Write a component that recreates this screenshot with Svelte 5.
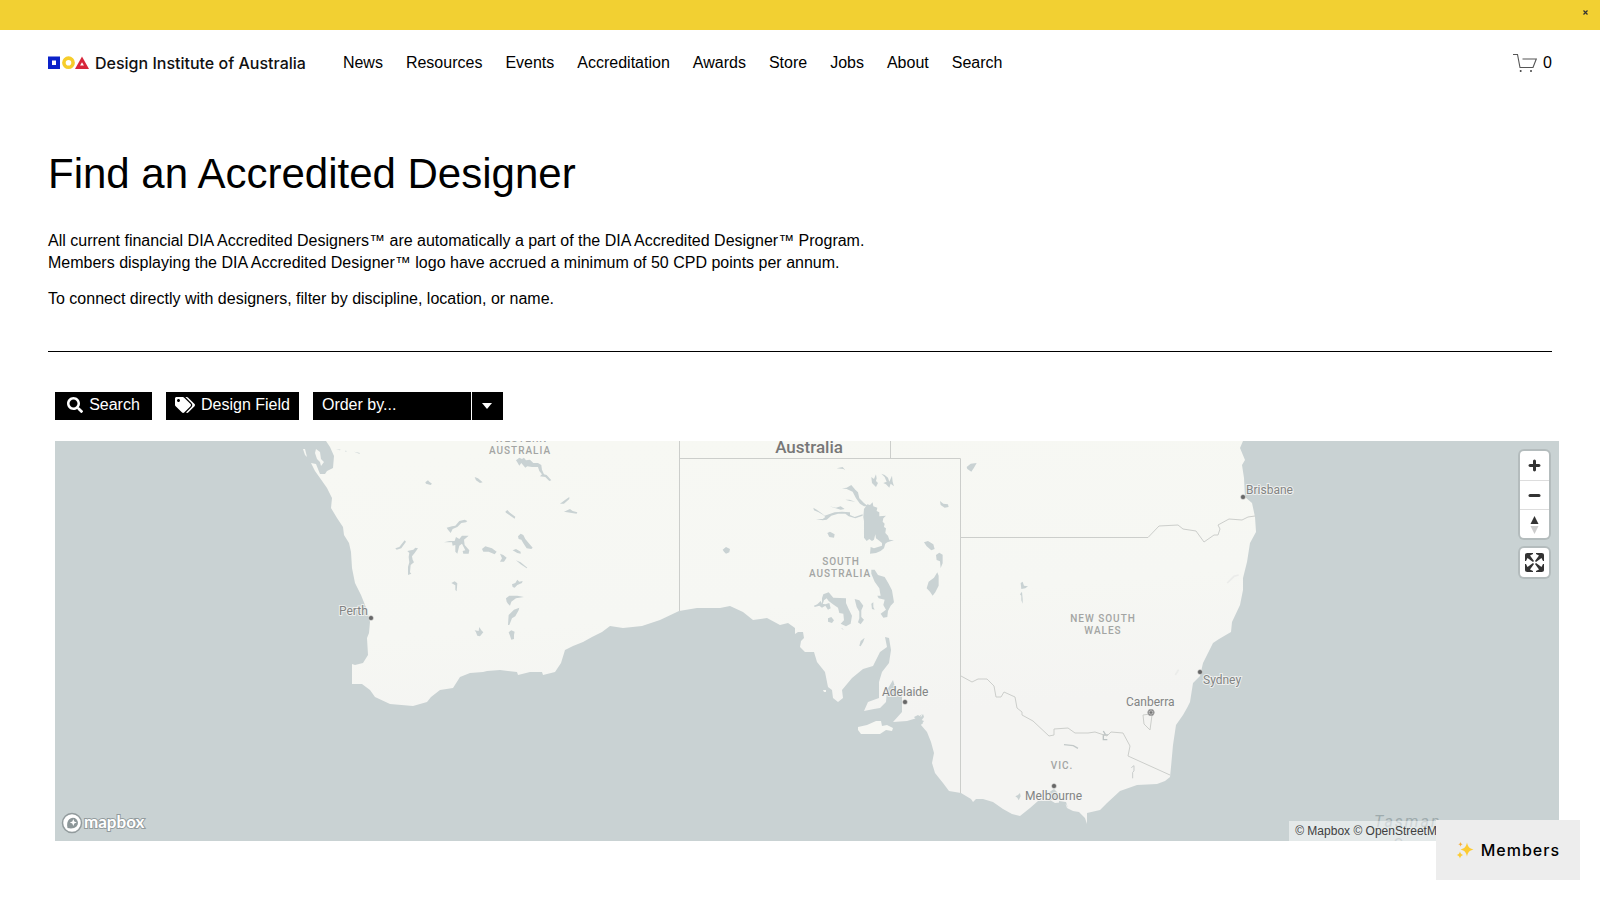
<script>
  const navItems = ["News", "Resources", "Events", "Accreditation", "Awards", "Store", "Jobs", "About", "Search"];

  const cities = [
    { name: "Perth", dot: [371, 618], label: [339, 615] },
    { name: "Adelaide", dot: [905, 702], label: [882, 696] },
    { name: "Melbourne", dot: [1054, 786], label: [1025, 800] },
    { name: "Sydney", dot: [1200, 672], label: [1203, 684] },
    { name: "Brisbane", dot: [1243, 497], label: [1246, 494] },
  ];

  const states = [
    { name: "WESTERN", x: 521, y: 442 },
    { name: "AUSTRALIA", x: 520, y: 454 },
    { name: "SOUTH", x: 841, y: 565 },
    { name: "AUSTRALIA", x: 840, y: 577 },
    { name: "NEW SOUTH", x: 1103, y: 622 },
    { name: "WALES", x: 1103, y: 634 },
    { name: "VIC.", x: 1062, y: 769 },
  ];

  let bannerOpen = $state(true);
  let order = $state("");
</script>

{#if bannerOpen}
  <div class="banner">
    <button class="banner-close" aria-label="Close announcement" onclick={() => (bannerOpen = false)}>
      <svg width="5" height="5" viewBox="0 0 5 5" stroke="#333" stroke-width="1.2"><path d="M.5 .5l4 4M4.5 .5l-4 4" /></svg>
    </button>
  </div>
{/if}

<header class="header">
  <a class="logo" href="#home">
    <svg width="41" height="14" viewBox="0 0 41 14" fill="none">
      <rect x="2" y="2.5" width="8" height="8.5" stroke="#0b22c9" stroke-width="4" />
      <circle cx="20.5" cy="6.7" r="4.6" stroke="#f6cd2b" stroke-width="3.6" />
      <path d="M34 .5L41 13H27z" fill="#d7263a" />
      <path d="M34 6.3l1.9 3.3h-3.8z" fill="#fff" />
    </svg>
    <span>Design Institute of Australia</span>
  </a>
  <nav class="nav">
    {#each navItems as item}
      <a href="#{item.toLowerCase()}">{item}</a>
    {/each}
  </nav>
  <a class="cart" href="#cart" aria-label="Cart, 0 items">
    <svg width="24" height="20" viewBox="0 0 24 20" fill="none" stroke="#555" stroke-width="1.1">
      <path d="M0 1.5h4.5L7 14.5h13l3.3-8.5H9.5" />
      <circle cx="7.7" cy="18" r="1" fill="#444" stroke="none" />
      <circle cx="18" cy="18" r="1" fill="#444" stroke="none" />
    </svg>
    <span>0</span>
  </a>
</header>

<main>
  <section class="intro">
    <h1>Find an Accredited Designer</h1>
    <p>
      All current financial DIA Accredited Designers™ are automatically a part of the DIA Accredited Designer™ Program.<br />
      Members displaying the DIA Accredited Designer™ logo have accrued a minimum of 50 CPD points per annum.
    </p>
    <p>To connect directly with designers, filter by discipline, location, or name.</p>
    <hr />
  </section>

  <section class="directory">
    <div class="filters">
      <button class="filter">
        <svg width="16" height="16" viewBox="0 0 512 512" fill="#fff">
          <path d="M505 442.700L405.300 343c-4.500-4.500-10.600-7-17-7H372c27.600-35.300 44-79.700 44-128C416 93.100 322.900 0 208 0S0 93.100 0 208s93.100 208 208 208c48.300 0 92.700-16.400 128-44v16.300c0 6.400 2.500 12.500 7 17l99.700 99.700c9.400 9.400 24.600 9.400 33.900 0l28.300-28.300c9.400-9.400 9.400-24.600.1-34zM208 336c-70.700 0-128-57.200-128-128 0-70.700 57.200-128 128-128 70.700 0 128 57.200 128 128 0 70.700-57.200 128-128 128z" />
        </svg>
        Search
      </button>
      <button class="filter">
        <svg width="20" height="16" viewBox="0 0 640 512" fill="#fff">
          <path d="M497.900 225.900L286.100 14.100A48 48 0 0 0 252.100 0H48C21.500 0 0 21.500 0 48v204.100a48 48 0 0 0 14.100 33.900l211.800 211.800c18.700 18.700 49.100 18.700 67.900 0l204.100-204.100c18.700-18.700 18.700-49.100 0-67.800zM112 160c-26.500 0-48-21.500-48-48s21.500-48 48-48 48 21.500 48 48-21.500 48-48 48zm513.900 133.800L421.800 497.900c-18.700 18.700-49.100 18.700-67.900 0l-.4-.4L527.600 323.500c17-17 26.400-39.600 26.400-63.600s-9.400-46.600-26.400-63.600L331.400 0h48.700a48 48 0 0 1 33.900 14.100l211.800 211.800c18.800 18.700 18.800 49.100.1 67.900z" />
        </svg>
        Design Field
      </button>
      <div class="order">
        <select aria-label="Order by" bind:value={order}>
          <option value="">Order by...</option>
          <option value="name">Name</option>
          <option value="location">Location</option>
        </select>
        <span class="order-arrow">
          <svg width="10" height="6" viewBox="0 0 10 6" fill="#fff"><path d="M0 0h10L5 6z" /></svg>
        </span>
      </div>
    </div>

    <div class="map">
      <svg class="map-canvas" viewBox="55 441 1504 400" preserveAspectRatio="xMidYMid slice" role="img" aria-label="Map of southern Australia">
        <defs>
          <linearGradient id="land" x1="0.3" y1="0" x2="0.5" y2="1">
            <stop offset="0" stop-color="#f7f8f3" />
            <stop offset="0.45" stop-color="#f6f7f3" />
            <stop offset="0.75" stop-color="#f4f4f2" />
          </linearGradient>
        </defs>
        <rect x="55" y="441" width="1504" height="400" fill="#c9d2d3" />
        <!-- mainland -->
        <path
          fill="url(#land)"
          d="M326 441L330 447L334 456L333 468L327 471L325 474L320 474L316 464L311 463L315 471L320 478L327 488L332 498L331 508L337 518L343 527L344 535L349 543L351 552L352 568L355 583L361 595L367 610L370 622L369 633L367 638L368 655L363 663L355 665L352 664L352 684L355 684L362 684L370 690L375 697L390 704L413 706L427 702L431 697L440 690L453 688L460 677L470 673L483 672L487 671L500 670L517 672L518 675L530 672L542 672L543 675L555 672L561 663L565 650L573 646L583 642L592 637L602 632L610 626L623 628L642 626L660 620L679 611L697 608L720 608L730 606L743 612L753 620L767 618L780 625L788 623L795 628L795 634L798 632L803 632L804 638L801 641L800 647L805 652L814 652L817 662L825 672L828 687L832 690L833 698L838 702L843 698L842 690L852 678L863 669L873 666L880 652L887 647L885 637L889 638L891 650L889 663L882 672L879 682L879 698L868 702L864 711L874 709L880 708L886 702L887 690L893 680L896 690L902 697L902 712L893 722L907 721L917 718L922 714L919 719L924 721L921 725L927 732L931 742L934 753L932 763L935 773L943 783L949 791L961 793L971 799L973 802L976 799L983 799L993 802L1003 809L1012 814L1020 816L1030 808L1038 801L1050 800L1055 803L1065 802L1067 808L1073 811L1079 812L1085 818L1087 824L1087 813L1100 810L1107 803L1120 791L1137 785L1157 784L1165 781L1170 777L1171 767L1173 745L1176 725L1183 715L1187 708L1190 702L1193 683L1200 676L1203 663L1208 653L1213 643L1219 639L1231 632L1232 622L1240 605L1243 590L1243 578L1247 562L1250 543L1256 532L1255 517L1252 503L1245 497L1244 478L1242 465L1245 460L1240 448L1243 441Z"
        />
        <!-- islands off Shark Bay, Kangaroo Island -->
        <path
          fill="#f6f7f3"
          d="M303 449l2 0 2 8-2-2zM316 449l4 3 1 7 3 3-3 4-1-4-3-3-2-6zM858 727l9-2 9-4 5 0 1 5 5-1 6 3-1 3-6-1-6 4-19 0-3-4zM823 690l3 0 0 2-2 0z"
        />
        <path fill="#c9d2d3" d="M914 717l4-2 3 2 2-3 1 3-3 4 2 3-4-1zM1048 793l6-4 3 3 2 7-8 1zM1059 801l7 1 2 6-2-4-7-1z" />

        <!-- salt lakes of Western Australia -->
        <g transform="translate(290 435) scale(0.3333)" fill="#c9d2d3">
          <path d="M688 68l8 4 6-4 6 8 12-2 10 10 14 0 10 6 2 14 6 14 8 2 14 16-6 2-12-12-16-2 6-6-8-10-4-12-18 0-14-2-6 4-12-14-6 8-6-10-4-6z" />
          <path d="M554 126l10 4 14 12-8 2-12-8zM406 142l8-6 4 4 8 6-4 4-14-4zM810 206l14-10 14-10 0 6-16 14zM822 230l18-8 8 6 14 4-2 4zM646 230l6-5 8 8 16 12-2 6-12-8-14-10z" />
          <path d="M470 278l16-4 10-2 12-14 16-4 8 4-4 4-14 2-12 12-14 6-6 12-8-10zM462 322l16-4 16 0 4-12 10 6 8-10 20 0-14 12 2 16 14 16-2 10-16 0-2-8 8-2-10-20-8 6-6 24-6-6 0-20-8 2-2-10z" />
          <path d="M316 340l12-4 16-20 4 4-14 20-14 4zM352 348l18-4 6-6 8 2-10 14-8 10 2 10 4 8-10 8-2 22 4 4-10 4 0-24 4-14-2-16 2-12zM484 444l10-5 8 6-2 24-4-4 0-14zM576 342l10-8 20 6 14 10-6 8-18-8-16 0zM630 356l10 4 10 8-8 12-12 0 6-10z" />
          <path d="M684 304l8-8 8 4 6 12 10 12 12 14-4 4-14-2-8-12-8-14-8-2zM668 346l10-4 14 8 0 6-10-2zM678 376l14 6 20 16-2 2-18-12zM666 448l10-4 6-10 6 6 10-2-2 6-14 6-8 8-6-2zM648 490l10-8 24 0 20 4-24 4-14 10-4 12-6-6-4-6zM656 540l16-16 16-6-2 8-10 18-10 6-8 20-4 0zM656 592l8-6 10 4-2 10 0 12-8 2-4-12zM554 586l12 2 2-12 6 10 6 6-10 12-8-2-4-10z" />
          <path d="M138 42l14 2-2 2zM165 47l6 1-4 2zM192 50l18 4-2 2z" />
        </g>

        <!-- lakes of South Australia -->
        <g transform="translate(680 435) scale(0.3333)" fill="#c9d2d3">
          <path d="M552 222l10-14 8 2 8-8 2 12 12 4-2 10 8 4 0 12 20-2-8 8-2 10 6 6-2 10 6 4-2 14 8 8 4 12 14 2-8 2-12 4-6 4-4 14-10 8-14 6-18 2 2-20 10 4 24-8 0-8-10-8-8-6-2-12-4 16-6 4-8-6-8 6-8-10 0-50-2-12z" />
          <path d="M486 160l14-2 14-8 12 14 8 8 4 18 14 14 12 10-12 0-12-8-12-16-10-20-18-8zM400 218l10 6 14 10 10 8 30-10 22-2 24 2 0 8 14 6 24-8 0 4-22 8-20-6-10-8-22 0-20 6-14 12-12 2-20-4 20 0 8-6-6-6-14-8-14-6zM448 214l20 4 14-4 12 8-12 2zM496 194l12 0 18 6-16-2zM470 100l18-4 8 10-6-4zM574 126l8 6 6-14 2 12-2 8 6 6-6 12-12-12zM604 116l10 4 10 8 4 12 8-18 2 18 4 14-10-8-4 12-10-10-8-4 10-4-6-14z" />
          <path d="M442 294l8-4 14 8-2 10-14-2zM128 344l10-8 12 6-2 10-10 4-6-6zM732 322l12-4 16 10 4 14-10 4-14-12zM768 360l10-7 10 6 0 26-6 14-2-20-10-4zM772 412l4 10 0 30-10 20-8 10-8-12-10-10 6-20 16-12zM780 198l10 8 14 2 2 8-12 2-12-8z" />
          <path d="M574 404l10 0 10 16 20 6 12 20 10 20 6 36-10 10-8 16-2 18-12 2-8-12 16-12-8-14 4-16-18-4-4-8 10 0-4-22-14-20-10-24z" />
          <path d="M426 490l4-12 16-6 14 16 38 2 0 14 8 18 10 20-4 24-14 8-16-8 10-10-2-20-12-2-4-16-12-8-16-12-6-8-8 6-6 18zM402 512l10-4 10-10 4 8 10 2 12-4 4 16-8 4-8-12-10 6-8-6-14 4zM444 550l10-4 8 10-6 8-12-4zM524 492l14 4 12 16-6 14 0 20 8 8-10 14-8-6 4-12 0-20-8-14zM574 506l6-4 0 14 4 8-8-2zM538 632l4-14 12-10-4 12-8 14zM484 578l8 6-6-2z" />
        </g>

        <!-- lakes of the eastern states -->
        <g transform="translate(940 435) scale(0.3333)">
          <path fill="#c9d2d3" d="M80 96l12-10 18-2-8 14-8 12-12-8zM242 444l6-4 4 12 12 2-8 6-12 2zM240 478l6-8 2 22 0 14-4-10 0-14zM226 1084l8-4 6-6 2 10-6 12-4-8z" />
          <path d="M372 929l28 3 14 8" fill="none" stroke="#c2c8c8" stroke-width="4" />
          <path d="M574 998l8-6 0 16-4 4 0 18" fill="none" stroke="#c8cccc" stroke-width="3" />
          <path d="M504 900l-14 0l0 14l12 0M490 888l6 10" fill="none" stroke="#bcc3c4" stroke-width="4" />
          <path d="M862 444l20-20 14-4m-190 300l10-16" fill="none" stroke="#ebecea" stroke-width="5" />
        </g>

        <g fill="none" stroke="#cccecb" stroke-width="1">
          <path d="M679.5 441V611M679 458.500H960.500V793M890.500 441V458M961 537.500H1148L1159 526L1178 525L1183 529L1196 531L1204 542L1214 535L1218 535L1220 529L1218 525L1229 519L1242 520L1248 517L1255 516" />
          <path d="M961 676L972 682L978 679L987 679L994 686L996 697L1001 697L1004 692L1015 697L1017 708L1022 712L1022 715L1033 721L1049 736L1054 735L1054 729L1068 728L1075 733L1088 733L1095 732L1107 736L1111 732L1123 733L1130 746L1128 756L1170 775" />
          <path d="M1150 714L1143 715L1144 724L1150 730L1152 715" />
        </g>

        <g class="state-names">
          {#each states as state}
            <text x={state.x} y={state.y}>{state.name}</text>
          {/each}
        </g>
        <text class="country" x="809" y="453">Australia</text>
        {#each cities as city}
          <circle cx={city.dot[0]} cy={city.dot[1]} r="2.5" fill="#666" stroke="#f6f6f4" stroke-width="0.5" />
          <text class="city" x={city.label[0]} y={city.label[1]}>{city.name}</text>
        {/each}
        <circle cx="1151" cy="712.5" r="3.2" fill="#777" stroke="#aaa" />
        <circle cx="1151" cy="712.5" r="1.8" fill="#777" stroke="#ddd" stroke-width="0.7" />
        <text class="city" x="1126" y="706">Canberra</text>
        <text class="sea" x="1374" y="827">Tasman</text>
        <text class="sea" x="1393" y="850">Sea</text>
      </svg>

      <div class="map-controls">
        <div class="control-group">
          <button aria-label="Zoom in">
            <svg width="29" height="29" viewBox="0 0 29 29" fill="#333">
              <path d="M14.5 8.500c-.75 0-1.500.75-1.500 1.500v3h-3c-.75 0-1.500.75-1.500 1.500S9.250 16 10 16h3v3c0 .75.75 1.500 1.500 1.500S16 19.750 16 19v-3h3c.75 0 1.500-.75 1.500-1.500S19.750 13 19 13h-3v-3c0-.75-.75-1.500-1.500-1.500z" />
            </svg>
          </button>
          <button aria-label="Zoom out">
            <svg width="29" height="29" viewBox="0 0 29 29" fill="#333"><rect x="8.5" y="13" width="12" height="3" rx="1.5" /></svg>
          </button>
          <button aria-label="Reset bearing to north">
            <svg width="29" height="29" viewBox="0 0 29 29">
              <path d="M10.5 14l4-8 4 8z" fill="#333" />
              <path d="M10.5 16l4 8 4-8z" fill="#ccc" />
            </svg>
          </button>
        </div>
        <div class="control-group">
          <button aria-label="Enter fullscreen">
            <svg width="29" height="29" viewBox="0 0 29 29" fill="#333">
              <path d="M24 16v5.500c0 1.750-.75 2.500-2.500 2.500H16v-1l3-1.500-4-5.500 1-1 5.500 4 1.500-3h1zM6 16l1.500 3 5.500-4 1 1-4 5.500 3 1.500v1H7.500C5.750 24 5 23.250 5 21.500V16h1zm7-11v1l-3 1.500 4 5.500-1 1-5.500-4L6 13H5V7.500C5 5.750 5.750 5 7.500 5H13zm11 2.500c0-1.750-.75-2.500-2.500-2.500H16v1l3 1.500-4 5.500 1 1 5.500-4 1.500 3h1V7.500z" />
            </svg>
          </button>
        </div>
      </div>

      <a class="mapbox-logo" href="#mapbox" aria-label="Mapbox">
        <svg width="90" height="24" viewBox="0 0 90 24">
          <circle cx="11" cy="12" r="9.5" fill="#fff" stroke="#929b9d" stroke-width="1.5" />
          <path d="M6.5 17c-1-4 0-7 1.700-8.700a5.100 5.100 0 1 1 7.300 7.200C13.500 17.500 10 18 6.500 17z" fill="#8d9799" />
          <path d="M12.300 8l1 2.500 2.500 1-2.500 1-1 2.500-1-2.500-2.500-1 2.500-1z" fill="#fff" />
          <text x="23" y="17">mapbox</text>
        </svg>
      </a>

      <div class="attribution">
        <a href="#mapbox-about">© Mapbox</a>
        <a href="#osm">© OpenStreetMap</a>
        <a class="improve" href="#improve">Improve this map</a>
      </div>
    </div>
  </section>
</main>

<button class="members">
  <svg width="18" height="18" viewBox="0 0 18 18" fill="#fccb32">
    <path d="M11 1.500c.9 4.200 2.300 6 6.500 7-4.200 1-5.600 2.800-6.500 7-.9-4.200-2.300-6-6.500-7 4.200-1 5.600-2.800 6.500-7z" />
    <path d="M4 10.500c.5 2.100 1.200 3 3.300 3.500C5.200 14.500 4.500 15.400 4 17.500 3.500 15.400 2.800 14.500.7 14 2.800 13.500 3.500 12.600 4 10.500z" />
    <path d="M4.500.8c.3 1.600.8 2.200 2.400 2.500-1.600.3-2.100.9-2.400 2.500-.3-1.600-.8-2.200-2.400-2.500C3.700 3 4.200 2.400 4.500.8z" fill="#f5ad3b" />
  </svg>
  Members
</button>

<style>
  :global(body) {
    background: #fff;
    color: #000;
    font-family: "Liberation Sans", Arial, Helvetica, sans-serif;
    font-size: 16px;
    line-height: 22px;
  }

  a {
    color: inherit;
    text-decoration: none;
  }

  button,
  select {
    border: none;
    border-radius: 0;
    font: inherit;
    cursor: pointer;
  }

  svg {
    display: block;
    flex: none;
  }

  .banner {
    display: flex;
    justify-content: flex-end;
    height: 30px;
    background: #f2d032;
  }

  .banner-close {
    display: flex;
    align-items: center;
    height: 25px;
    padding: 0 12px;
    background: none;
  }

  .header {
    display: flex;
    align-items: center;
    height: 66px;
    padding: 0 48px;
  }

  .logo {
    display: flex;
    align-items: center;
    gap: 6px;
    margin-right: 37px;
    color: #111;
    font-family: Inter, sans-serif;
    font-size: 16px;
    font-weight: 500;
    white-space: nowrap;
  }

  .nav {
    display: flex;
    gap: 23px;
  }

  .cart {
    display: flex;
    align-items: center;
    gap: 6px;
    margin-left: auto;
  }

  .intro {
    padding: 48px 48px 0;
  }

  h1 {
    margin: 0 0 26px;
    font-size: 42px;
    font-weight: 400;
    line-height: 60px;
  }

  p {
    margin: 0 0 14px;
  }

  hr {
    height: 1px;
    margin: 41px 0 0;
    border: none;
    background: #000;
  }

  .directory {
    padding: 40px 41px 48px 55px;
  }

  .filters {
    display: flex;
    gap: 14px;
    margin-bottom: 21px;
  }

  .filter {
    display: flex;
    align-items: center;
    justify-content: center;
    gap: 6px;
    min-width: 97px;
    height: 28px;
    padding: 0 9px 2px;
    background: #000;
    color: #fff;
  }

  .order {
    position: relative;
    width: 190px;
    height: 28px;
  }

  .order select {
    width: 100%;
    height: 100%;
    padding: 0 40px 2px 9px;
    appearance: none;
    background: #000;
    color: #fff;
  }

  .order-arrow {
    position: absolute;
    top: 0;
    right: 0;
    display: flex;
    align-items: center;
    justify-content: center;
    width: 31px;
    height: 100%;
    border-left: 1px solid #fff;
    pointer-events: none;
  }

  .map {
    position: relative;
    height: 400px;
    overflow: hidden;
  }

  .map-canvas {
    width: 100%;
    height: 100%;
    font-family: Roboto, sans-serif;
  }

  .state-names text {
    fill: #a3a5a3;
    font-size: 10px;
    font-weight: 500;
    letter-spacing: 1px;
    text-anchor: middle;
  }

  .country {
    fill: #777;
    font-size: 17px;
    font-weight: 500;
    text-anchor: middle;
  }

  .city {
    fill: #828484;
    font-size: 12px;
    paint-order: stroke;
    stroke: rgba(246, 246, 244, 0.8);
    stroke-width: 2px;
  }

  .sea {
    fill: #9eabad;
    font-size: 16px;
    font-style: italic;
    letter-spacing: 2px;
  }

  .map-controls {
    position: absolute;
    top: 10px;
    right: 10px;
    display: flex;
    flex-direction: column;
    gap: 10px;
  }

  .control-group {
    overflow: hidden;
    border-radius: 4px;
    background: #fff;
    box-shadow: 0 0 0 2px rgba(0, 0, 0, 0.1);
  }

  .control-group button {
    display: block;
    box-sizing: border-box;
    width: 29px;
    height: 29px;
    padding: 0;
    overflow: hidden;
    background: none;
  }

  .control-group button + button {
    border-top: 1px solid #ddd;
  }

  .mapbox-logo {
    position: absolute;
    bottom: 6px;
    left: 6px;
  }

  .mapbox-logo text {
    fill: #fff;
    font-family: Lato, sans-serif;
    font-size: 17px;
    font-weight: 700;
    paint-order: stroke;
    stroke: #929b9d;
    stroke-width: 2px;
  }

  .attribution {
    position: absolute;
    right: 0;
    bottom: 0;
    padding: 0 6px;
    background: rgba(255, 255, 255, 0.5);
    color: #404040;
    font-size: 12px;
    line-height: 20px;
    white-space: nowrap;
  }

  .improve {
    font-weight: 700;
  }

  .members {
    position: fixed;
    right: 20px;
    bottom: 20px;
    display: flex;
    align-items: center;
    gap: 7px;
    height: 60px;
    padding: 0 20px;
    background: #ededed;
    color: #000;
    font-family: Inter, sans-serif;
    font-weight: 500;
    letter-spacing: 1px;
  }
</style>
